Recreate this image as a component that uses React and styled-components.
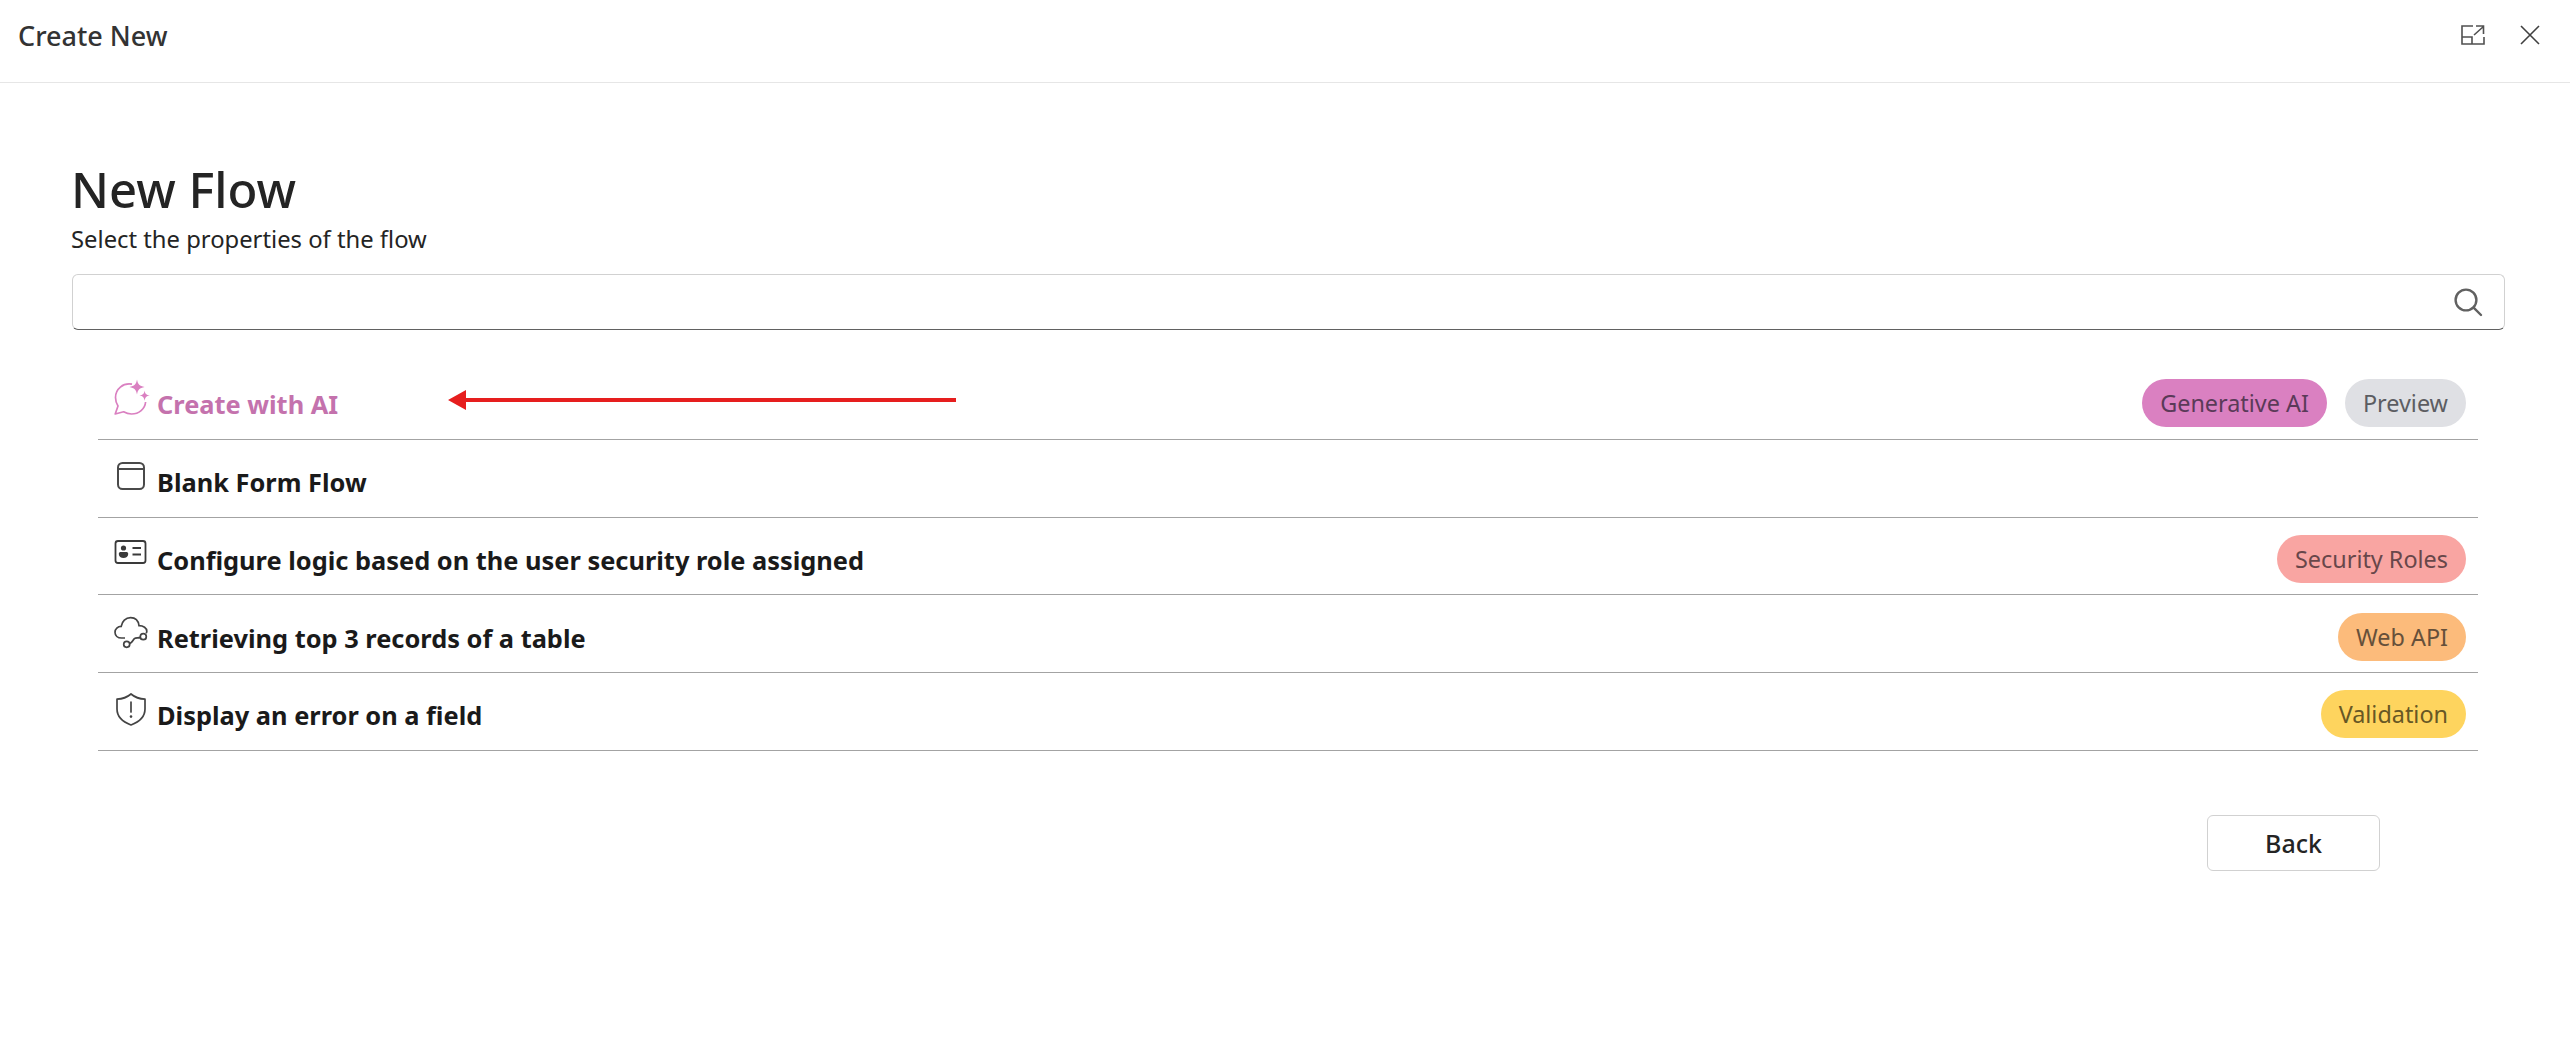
import React from "react";
import styled, { createGlobalStyle } from "styled-components";

const GlobalStyle = createGlobalStyle`
  html, body {
    margin: 0;
    padding: 0;
    background: #fff;
    font-family: "Noto Sans", "Open Sans", sans-serif;
    color: #242424;
  }
`;

const rows = [
  { id: "ai", label: "Create with AI", icon: "ai", ai: true, tags: [
    { text: "Generative AI", bg: "#da80c1", fg: "#5a3a58" },
    { text: "Preview", bg: "#dfe0e4", fg: "#5c5d62" },
  ] },
  { id: "blank", label: "Blank Form Flow", icon: "window", tags: [] },
  { id: "roles", label: "Configure logic based on the user security role assigned", icon: "card", tags: [
    { text: "Security Roles", bg: "#f9a5a2", fg: "#68474a" },
  ] },
  { id: "api", label: "Retrieving top 3 records of a table", icon: "cloud", tags: [
    { text: "Web API", bg: "#fcbb7b", fg: "#66503a" },
  ] },
  { id: "error", label: "Display an error on a field", icon: "shield", tags: [
    { text: "Validation", bg: "#fed45e", fg: "#675725" },
  ] },
];

const RowIcon = ({ name }) => {
  if (name === "ai") {
    return (
      <svg width="38" height="38" viewBox="0 0 38 38" fill="none" stroke="#da80c1" strokeWidth="1.7">
        <path d="M20 5.2 C11 3.6 3.5 10 3.5 18.5 C3.5 22 4.6 24.8 6 27 L3.2 35 L11.6 32.8 C14 34.2 16.5 35 19.5 35 C27 35 33 30 33.6 23" strokeLinejoin="round" />
        <path d="M25 0.5 C26 5.6 27.4 7 32.6 8 C27.4 9 26 10.4 25 15.6 C24 10.4 22.6 9 17.4 8 C22.6 7 24 5.6 25 0.5 Z" fill="#da80c1" stroke="none" />
        <path d="M32.6 11.6 C33.2 15 34.2 16 37.8 16.6 C34.2 17.2 33.2 18.2 32.6 21.8 C32 18.2 31 17.2 27.4 16.6 C31 16 32 15 32.6 11.6 Z" fill="#da80c1" stroke="none" />
      </svg>
    );
  }
  if (name === "window") {
    return (
      <svg width="38" height="38" viewBox="0 0 38 38" fill="none" stroke="#4a4a4a" strokeWidth="2">
        <rect x="6" y="6" width="26" height="26" rx="4.5" />
        <path d="M6 12 H32" />
      </svg>
    );
  }
  if (name === "card") {
    return (
      <svg width="38" height="38" viewBox="0 0 38 38" fill="none" stroke="#3a3a3a" strokeWidth="1.8">
        <rect x="3.5" y="6" width="30" height="22" rx="2.5" />
        <circle cx="11.5" cy="13" r="2.6" fill="#3a3a3a" stroke="none" />
        <path d="M6.8 19 C6.8 17.6 7.6 17 9 17 H14 C15.4 17 16.2 17.6 16.2 19 C16.2 21.6 14 23 11.5 23 C9 23 6.8 21.6 6.8 19 Z" fill="#3a3a3a" stroke="none" />
        <path d="M20.5 13 H29 M20.5 19.5 H29" />
      </svg>
    );
  }
  if (name === "cloud") {
    return (
      <svg width="38" height="38" viewBox="0 0 38 38" fill="none" stroke="#444" strokeWidth="1.7">
        <path d="M13 25 H9.6 C5.6 25 3 22.4 3 19.2 C3 15.8 5.8 13.4 9.2 13.4 C10 8.6 13.6 4.6 18.6 4.6 C23.4 4.6 26.4 8 27 12.6 C31.4 12.6 34.8 15 34.8 18.2 C34.8 19 34.6 19.6 34.2 20.2" />
        <circle cx="31.3" cy="23.7" r="3" />
        <circle cx="14.7" cy="31.3" r="3" />
        <path d="M17.6 30.6 C20.4 29.8 20.8 27 22.4 25.6 C24 24.2 26 25.4 28.4 24.4" />
      </svg>
    );
  }
  return (
    <svg width="38" height="38" viewBox="0 0 38 38" fill="none" stroke="#444" strokeWidth="1.7">
      <path d="M19 4 C23 7.4 27.6 9 33 9.2 V19 C33 26 28 31.6 19 35 C10 31.6 5 26 5 19 V9.2 C10.4 9 15 7.4 19 4 Z" strokeLinejoin="round" />
      <path d="M19 12 V22" strokeLinecap="round" />
      <circle cx="19" cy="26.6" r="1.3" fill="#444" stroke="none" />
    </svg>
  );
};

const App = () => {
  return (
    <Page>
      <GlobalStyle />
      <Header>
        <HeaderTitle>Create New</HeaderTitle>
        <HeaderActions>
          <IconButton aria-label="Expand">
            <svg width="24" height="20" viewBox="0 0 24 20" fill="none" stroke="#505050" strokeWidth="1.6">
              <path d="M12 1 H1 V19 H23 V12" />
              <path d="M1 12 H11 V19" />
              <path d="M13 10 L22.5 1.5 M15 1 H22.5 V9" />
            </svg>
          </IconButton>
          <IconButton aria-label="Close">
            <svg width="22" height="22" viewBox="0 0 22 22" fill="none" stroke="#404040" strokeWidth="1.6">
              <path d="M2 2 L20 20 M20 2 L2 20" />
            </svg>
          </IconButton>
        </HeaderActions>
      </Header>

      <Main>
        <Title>New Flow</Title>
        <Subtitle>Select the properties of the flow</Subtitle>
        <SearchBox>
          <SearchInput type="text" />
          <svg width="30" height="30" viewBox="0 0 30 30" fill="none" stroke="#616161" strokeWidth="2.4">
            <circle cx="13" cy="13" r="10.4" />
            <path d="M20.6 20.6 L28 28" strokeLinecap="round" />
          </svg>
        </SearchBox>

        <List>
          {rows.map((row) => (
            <Row key={row.id}>
              <IconSlot>
                <RowIcon name={row.icon} />
              </IconSlot>
              <RowLabel $ai={row.ai}>{row.label}</RowLabel>
              <Tags>
                {row.tags.map((tag) => (
                  <Tag key={tag.text} $bg={tag.bg} $fg={tag.fg}>{tag.text}</Tag>
                ))}
              </Tags>
            </Row>
          ))}
          <Arrow width="508" height="22" viewBox="0 0 508 22">
            <path d="M18 9 H508 V13 H18 Z M0 11 L18 1 V21 Z" fill="#e61e1e" />
          </Arrow>
        </List>

        <Footer>
          <BackButton>Back</BackButton>
        </Footer>
      </Main>
    </Page>
  );
};

export default App;

const Page = styled.div`
  width: 100%;
  min-height: 1064px;
  background: #fff;
`;

const Header = styled.header`
  height: 82px;
  border-bottom: 1px solid #e6e6e6;
  display: flex;
  align-items: center;
  justify-content: space-between;
  padding: 0 29px 0 18px;
`;

const HeaderTitle = styled.div`
  font-size: 27px;
  font-weight: 500;
  color: #333;
  margin-bottom: 12px;
`;

const HeaderActions = styled.div`
  display: flex;
  align-items: center;
  gap: 34px;
  margin-bottom: 12px;
`;

const IconButton = styled.button`
  border: 0;
  background: none;
  padding: 0;
  display: flex;
`;

const Main = styled.main`
  padding: 72px 65px 0 71px;
`;

const Title = styled.h1`
  margin: 0;
  font-size: 49px;
  line-height: 68px;
  font-weight: 500;
  color: #242424;
`;

const Subtitle = styled.p`
  margin: 0;
  font-size: 23.8px;
  line-height: 32px;
  color: #242424;
`;

const SearchBox = styled.div`
  margin: 19px 0 0 1px;
  height: 56px;
  box-sizing: border-box;
  display: flex;
  align-items: center;
  padding-right: 21px;
  border: 1px solid #d1d1d1;
  border-bottom: 1.5px solid #616161;
  border-radius: 6px;
`;

const SearchInput = styled.input`
  flex: 1;
  border: 0;
  outline: 0;
  background: transparent;
  font: inherit;
`;

const List = styled.div`
  position: relative;
  margin: 32px 27px 0 27px;
`;

const Row = styled.div`
  height: 77.75px;
  box-sizing: border-box;
  display: flex;
  align-items: center;
  border-bottom: 1.5px solid #a3a3a3;
  padding: 6px 12px 0 0;
`;

const IconSlot = styled.div`
  width: 59px;
  padding-left: 14px;
  box-sizing: border-box;
  display: flex;
  margin-bottom: 10px;
`;

const RowLabel = styled.div`
  flex: 1;
  padding-top: 2px;
  font-size: 25.4px;
  font-weight: 700;
  color: ${(p) => (p.$ai ? "#c472ad" : "#1a1a1a")};
`;

const Tags = styled.div`
  display: flex;
  gap: 18px;
`;

const Tag = styled.span`
  height: 48px;
  box-sizing: border-box;
  padding: 0 18px;
  display: flex;
  align-items: center;
  border-radius: 24px;
  font-size: 23.4px;
  background: ${(p) => p.$bg};
  color: ${(p) => p.$fg};
`;

const Arrow = styled.svg`
  position: absolute;
  left: 350px;
  top: 27px;
`;

const Footer = styled.div`
  display: flex;
  justify-content: flex-end;
  padding: 64px 125px 0 0;
`;

const BackButton = styled.button`
  width: 173px;
  height: 56px;
  border: 1.5px solid #d1d1d1;
  border-radius: 6px;
  background: #fff;
  font-family: inherit;
  font-size: 25px;
  font-weight: 500;
  color: #242424;
`;
